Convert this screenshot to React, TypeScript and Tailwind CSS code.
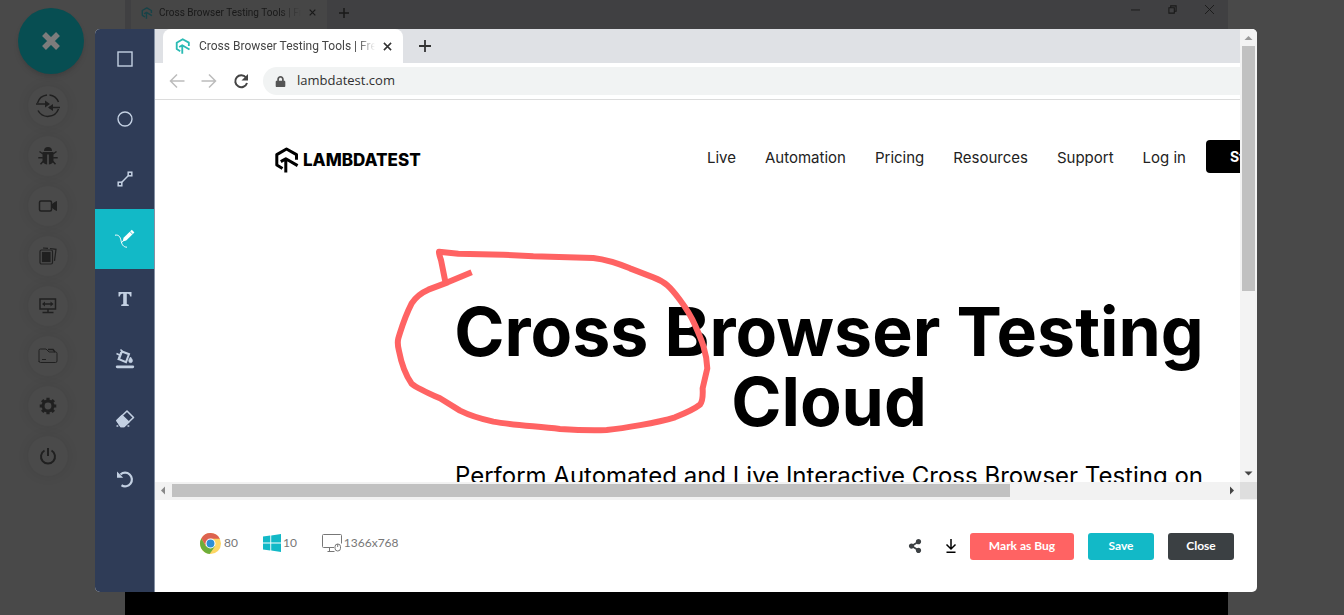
import React from "react";
import { FaLock, FaShareAlt } from "react-icons/fa";

const BrandMark = ({ className }: { className: string }) => (
  <svg viewBox="0 0 24 26" className={className} fill="none" stroke="currentColor" strokeWidth="3" strokeLinejoin="round">
    <path d="M7.5 21.5 1.8 18V7.6L11.5 2l10 5.6v5.2" />
    <path d="M5.8 14.6 10.8 11.7 22.6 18.6M10.8 12v13.4" />
  </svg>
);

const SwitchIcon = () => (
  <svg viewBox="0 0 26 26" className="size-[26px]" fill="none" stroke="currentColor" strokeWidth="1.5">
    <path d="M2.500 10A11.3 11.3 0 0 1 12 2M14.500 2A11.3 11.3 0 0 1 23.500 9M23.500 16A11.3 11.3 0 0 1 3 17.500" />
    <path d="M1 11h12M25 14.500H14" />
    <path d="m10 7.500 5 3.500-5 3.500zM18 11l-5 3.500 5 3.500z" fill="currentColor" stroke="none" />
  </svg>
);

const BugIcon = () => (
  <svg viewBox="0 0 20 20" className="size-5" fill="currentColor">
    <path d="M6 5a4 4 0 0 1 8 0z" />
    <path d="M4.500 6h11v7.500q0 4.500-4.600 5V8.500H9.100v10q-4.600-.5-4.600-5z" />
    <path d="M5 8 1.500 5.500M15 8l3.500-2.500M.3 11.800h4.500M15.200 11.800h4.500M5.500 15l-3 3.200M14.500 15l3 3.200" stroke="currentColor" strokeWidth="1.500" />
  </svg>
);

const VideoIcon = () => (
  <svg viewBox="0 0 20 14" className="h-3.5 w-5" fill="none" stroke="currentColor" strokeWidth="1.5">
    <rect x="1.5" y="2" width="12" height="10" rx="1.5" />
    <path d="m14.5 5 4-2.500v9l-4-2.500z" fill="currentColor" strokeWidth="1" />
  </svg>
);

const GalleryIcon = () => (
  <svg viewBox="0 0 20 20" className="size-5" fill="none" stroke="currentColor" strokeWidth="1.2">
    <rect x="2" y="4" width="12.500" height="14" rx="1.5" />
    <rect x="4.5" y="6.5" width="7.500" height="9" fill="currentColor" />
    <path d="M5 2l5 .3M12 2.500l6 .8-1.500 11.500" />
  </svg>
);

const MonitorIcon = () => (
  <svg viewBox="0 0 20 18" className="h-[18px] w-5" fill="none" stroke="currentColor" strokeWidth="1.5">
    <rect x="2" y="2" width="15.500" height="10" />
    <path d="M5.500 7H14M10 12v3M4.500 15.500h11" />
    <path d="m7 4.500-3 2.500 3 2.500zM12.500 4.500l3 2.500-3 2.500z" fill="currentColor" stroke="none" />
  </svg>
);

const FolderIcon = () => (
  <svg viewBox="0 0 20 16" className="h-4 w-5" fill="none" stroke="currentColor" strokeWidth="1">
    <path d="M1 14V2.500Q1 1 2.500 1H8l3 3h6.500Q19 4 19 5.500v7.500q0 1.500-1.500 1.500h-15Q1 14.500 1 13" />
    <path d="M10 1.500h5l2 2.500" strokeWidth="1.500" />
    <path d="M4 11.500h4" />
  </svg>
);

const GearIcon = () => (
  <svg viewBox="0 0 20 20" className="size-[18px]" fill="none" stroke="currentColor">
    <circle cx="10" cy="10" r="5.500" strokeWidth="3.400" />
    <path d="M10 .8v3.200M10 16v3.200M.8 10H4M16 10h3.200M3.500 3.500l2.300 2.300M14.200 14.200l2.300 2.300M3.500 16.500l2.300-2.300M14.200 5.800l2.300-2.300" strokeWidth="3.600" />
  </svg>
);

const PowerIcon = () => (
  <svg viewBox="0 0 18 18" className="size-[18px]" fill="none" stroke="currentColor" strokeWidth="2">
    <path d="M5.500 3.500a7 7 0 1 0 7 0M9 1v8" />
  </svg>
);

const railItems = [
  { label: "Switch", icon: <SwitchIcon /> },
  { label: "Report bug", icon: <BugIcon /> },
  { label: "Record video", icon: <VideoIcon /> },
  { label: "Gallery", icon: <GalleryIcon /> },
  { label: "Resolution", icon: <MonitorIcon /> },
  { label: "Files", icon: <FolderIcon /> },
  { label: "Settings", icon: <GearIcon /> },
  { label: "End session", icon: <PowerIcon /> },
];

const tools = [
  {
    label: "Rectangle",
    icon: (
      <svg viewBox="0 0 18 18" className="size-[18px]" fill="none" stroke="currentColor" strokeWidth="1.400">
        <rect x="2" y="2" width="14" height="14" />
      </svg>
    ),
  },
  {
    label: "Circle",
    icon: (
      <svg viewBox="0 0 18 18" className="size-[18px]" fill="none" stroke="currentColor" strokeWidth="1.400">
        <circle cx="9" cy="9" r="7" />
      </svg>
    ),
  },
  {
    label: "Line",
    icon: (
      <svg viewBox="0 0 18 18" className="size-[18px]" fill="none" stroke="currentColor" strokeWidth="1.500">
        <rect x="2.200" y="12.200" width="3.600" height="3.600" />
        <rect x="12.200" y="2.200" width="3.600" height="3.600" />
        <path d="m5.800 12.200 6.400-6.400" />
      </svg>
    ),
  },
  {
    label: "Pen",
    icon: (
      <svg viewBox="0 0 22 22" className="size-[22px]">
        <path d="M8.600 13.600 9.600 9.800 17.800 1.800l2.600 2.700-8.200 8z" fill="currentColor" />
        <path d="m15.600 3.200 3.200 3.300" stroke="#12b9c7" strokeWidth=".8" />
        <path d="M1 7.200c4-.8 5.300 2 6 5.300.8 4 2.200 6.600 6 6.700M9 13.200l-2 1.800" fill="none" stroke="currentColor" strokeWidth="1" />
      </svg>
    ),
  },
  {
    label: "Text",
    icon: (
      <svg viewBox="0 0 14 16" className="h-4 w-3.5" fill="currentColor">
        <path d="M.5 1h13v4.500h-1.300q-.3-2.800-2.200-2.800H8.800v10.200l2 .8V15H3.200v-1.300l2-.8V2.700H4q-1.900 0-2.200 2.800H.5z" />
      </svg>
    ),
  },
  {
    label: "Fill",
    icon: (
      <svg viewBox="0 0 20 22" className="h-[22px] w-5" fill="none" stroke="currentColor">
        <path d="m7 3.500 7 2.700-3 8-7-3z" strokeWidth="2" />
        <path d="M1.500 5.500 4.500 7M5.500 1.500l3 3M3 12l3-8" strokeWidth="1.500" />
        <path d="M15.500 9c1.500 2 2 2.800 2 3.800a1.900 1.900 0 0 1-3.800 0c0-1 .6-2 1.800-3.800z" fill="currentColor" strokeWidth=".6" />
        <path d="M2.200 18.800h15.600" strokeWidth="2.800" strokeLinecap="round" />
      </svg>
    ),
  },
  {
    label: "Eraser",
    icon: (
      <svg viewBox="0 0 20 20" className="size-5" fill="none" stroke="currentColor" strokeWidth="1.600" strokeLinejoin="round">
        <path d="M2 11.500 12 2l6.500 6.500-9.500 9H6z" />
        <path d="m2 11.500 5-5 6.800 6.500L9 17.500H6z" fill="currentColor" />
        <path d="M1.500 17h1.800M12.500 17h1.800" />
      </svg>
    ),
  },
  {
    label: "Undo",
    icon: (
      <svg viewBox="0 0 18 18" className="size-[18px]" fill="none" stroke="currentColor" strokeWidth="2.200">
        <path d="M4.500 4.500A6.800 6.800 0 1 1 5.500 15.300" />
        <path d="M1 1.500v6.200h6.200z" fill="currentColor" stroke="none" />
      </svg>
    ),
  },
];

const navLinks = ["Live", "Automation", "Pricing", "Resources", "Support", "Log in"];

const CrossIcon = ({ className }: { className: string }) => (
  <svg viewBox="0 0 10 10" className={className} fill="none" stroke="currentColor" strokeWidth="1.700">
    <path d="m1 1 8 8M9 1 1 9" />
  </svg>
);

const PlusIcon = ({ className }: { className: string }) => (
  <svg viewBox="0 0 12 12" className={className} fill="none" stroke="currentColor" strokeWidth="1.800">
    <path d="M6 0v12M0 6h12" />
  </svg>
);

const ChromeLogo = () => (
  <svg viewBox="0 0 48 48" className="size-[21px]">
    <circle cx="24" cy="24" r="24" fill="#fdd663" />
    <path d="M24 24 13.600 30 3.200 12A24 24 0 0 0 22 47.900L34.400 30z" fill="#6dae3a" />
    <path d="M24 24v-11h21.300A24 24 0 0 0 3.200 12l10.400 18z" fill="#dd6350" />
    <circle cx="24" cy="24" r="11.500" fill="#fff" />
    <circle cx="24" cy="24" r="9" fill="#2d8fd5" />
  </svg>
);

const WindowsLogo = () => (
  <svg viewBox="0 0 18 18" className="size-[18px]" fill="#12b9c7">
    <path d="M0 2.500 7.300 1.500v7H0zM8.200 1.400 18 0v8.500H8.200zM0 9.400h7.300v7L0 15.400zM8.200 9.400H18V18l-9.800-1.400z" />
  </svg>
);

const DisplayIcon = () => (
  <svg viewBox="0 0 20 18" className="h-[18px] w-5" fill="none" stroke="#777" strokeWidth="1">
    <path d="M12 13.500H1.500q-1 0-1-1v-11q0-1 1-1h17q1 0 1 1v8M5.500 17.500h7M7.500 14v3" />
    <rect x="13" y="10" width="5.500" height="7" rx="2.700" />
    <path d="M15.700 10v3" />
  </svg>
);

export default function App() {
  return (
    <div className="relative flex h-screen min-h-[600px] overflow-hidden bg-[#494949] font-['Inter',sans-serif]">
      <aside className="w-[125px] shrink-0 text-[#202020]">
        <button aria-label="Close menu" className="mt-2 ml-[18px] flex size-[66px] items-center justify-center rounded-full bg-[#074e52] text-[#7c7c7c] shadow-md">
          <svg viewBox="0 0 18 18" className="size-[18px]" stroke="currentColor" strokeWidth="5.500">
            <path d="m2 2 14 14M16 2 2 16" />
          </svg>
        </button>
        <nav aria-label="Session" className="mt-3 ml-7 flex flex-col gap-2.5">
          {railItems.map((item) => (
            <button key={item.label} aria-label={item.label} className="flex size-10 items-center justify-center rounded-full bg-[#4a4a4a] shadow-[0_0_12px_rgba(0,0,0,0.09)]">
              {item.icon}
            </button>
          ))}
        </nav>
      </aside>

      <div className="mr-[116px] flex min-w-0 flex-1 flex-col bg-black">
        <div className="flex h-[29px] items-center bg-[#404042] pl-1.5 text-[#191919]">
          <div className="flex h-full w-[196px] items-center bg-[#464646] pb-1 pl-2.5">
            <BrandMark className="size-3 shrink-0 text-[#174348]" />
            <span className="ml-1.5 w-[142px] overflow-hidden whitespace-nowrap font-['Roboto',sans-serif] text-[10px] [mask-image:linear-gradient(to_right,black_85%,transparent)]">
              Cross Browser Testing Tools | Free
            </span>
            <CrossIcon className="ml-2 size-[7px] shrink-0" />
          </div>
          <PlusIcon className="mb-1 ml-3 size-2.5" />
          <div className="mr-3.5 mb-2.5 ml-auto flex items-center gap-7">
            <svg viewBox="0 0 10 10" className="size-[9px]" fill="none" stroke="currentColor"><path d="M0 5.500h10" /></svg>
            <svg viewBox="0 0 10 10" className="size-[9px]" fill="none" stroke="currentColor" strokeWidth="1.200"><path d="M1 3h6v6H1zM3 3V1h6v6H7" /></svg>
            <svg viewBox="0 0 10 10" className="size-[9px]" fill="none" stroke="currentColor"><path d="m0 0 10 10M10 0 0 10" /></svg>
          </div>
        </div>
      </div>

      <div role="dialog" aria-label="Screenshot editor" className="absolute top-[29px] right-[87px] bottom-[23px] left-[95px] flex overflow-hidden rounded-[5px] bg-white">
        <div role="toolbar" aria-label="Drawing tools" className="flex w-[60px] shrink-0 flex-col border-r border-[#8490a3] bg-[#2f3c57] text-[#c3d0e2]">
          {tools.map((tool) => (
            <button
              key={tool.label}
              aria-label={tool.label}
              className={tool.label === "Pen" ? "flex h-[60px] items-center justify-center bg-[#12b9c7] text-white" : "flex h-[60px] items-center justify-center"}
            >
              {tool.icon}
            </button>
          ))}
        </div>

        <div className="flex min-w-0 flex-1 flex-col">
          <div className="flex min-h-0 flex-1">
            <div className="relative min-w-0 flex-1 overflow-hidden">
              <div className="w-[1348px]">
                <div className="flex h-[34px] items-center bg-[#dfe1e5] pl-2">
                  <div className="flex h-full w-60 items-center rounded-t-lg bg-white pl-3 text-[#454545]">
                    <BrandMark className="mr-2 size-4 shrink-0 text-[#2bbbb4]" />
                    <span className="w-[176px] shrink-0 overflow-hidden whitespace-nowrap font-['Roboto',sans-serif] text-xs [mask-image:linear-gradient(to_right,black_90%,transparent)]">
                      Cross Browser Testing Tools | Free
                    </span>
                    <CrossIcon className="ml-2 size-[9px] shrink-0 text-[#333]" />
                  </div>
                  <PlusIcon className="ml-4 size-3 text-[#333]" />
                </div>
                <div className="flex h-[37px] items-center border-b border-[#dcdcdc] pl-3.5">
                  <svg viewBox="0 0 82 16" className="h-4 w-[82px] shrink-0" fill="none" strokeWidth="1.500">
                    <path d="M15.500 8H2M8 1.500 1.500 8 8 14.500M32.500 8H46M40 1.500 46.500 8 40 14.500" stroke="#bcbcbc" />
                    <path d="M77 4.500A6 6 0 1 0 78 10" stroke="#444" strokeWidth="2" />
                    <path d="M79 1v6.500h-6.500z" fill="#444" />
                  </svg>
                  <div className="ml-3 flex h-7 flex-1 items-center rounded-l-full bg-[#f1f3f3] pl-3">
                    <FaLock className="size-[11px] text-[#555]" />
                    <input aria-label="Address" defaultValue="lambdatest.com" className="ml-[11px] w-60 bg-transparent font-['Open_Sans',sans-serif] text-[13px] text-[#303030] outline-none" />
                  </div>
                </div>
                <header className="mt-10 flex items-start pl-[120px]">
                  <div className="flex w-[432px] items-center gap-1 pt-[7px] text-black">
                    <BrandMark className="h-[26px] w-6" />
                    <span className="text-[17px] leading-6 font-extrabold">LAMBDATEST</span>
                  </div>
                  <nav aria-label="Main" className="mr-5 flex gap-[29px] pt-1.5 text-[15px] leading-6 text-[#222]">
                    {navLinks.map((link) => (
                      <a key={link} href="#">{link}</a>
                    ))}
                  </nav>
                  <button className="h-[33px] rounded bg-black px-6 text-sm font-bold text-white">Start Testing</button>
                </header>
                <main className="mx-auto mt-[123px] w-[800px] text-center text-black">
                  <h1 className="text-[68px] leading-[70px] font-bold">
                    Cross Browser Testing Cloud
                  </h1>
                  <p className="mt-6 text-2xl whitespace-nowrap">
                    Perform Automated and Live Interactive Cross Browser Testing on
                  </p>
                </main>
              </div>
              <svg className="pointer-events-none absolute top-0 left-0 h-[453px] w-[1085px]" viewBox="0 0 1085 453">
                <path
                  transform="translate(225 201) scale(.3333)"
                  d="M275 127 203 157 145 179C120 190 107 201 95 220C72 265 66 290 55 325Q51 340 57 363C65 405 80 440 95 461Q110 474 180 505L240 542Q280 562 340 575C400 586 460 588 540 597Q620 602 680 600C730 595 830 579 885 562Q940 540 960 524Q970 513 968 475L982 415C980 365 965 330 945 285Q930 250 900 210C870 170 855 155 820 142L750 115Q690 90 640 84L460 79 370 74 235 71 177 65Q176 70 183 90L196 155"
                  fill="none"
                  stroke="#ff6363"
                  strokeWidth="18"
                  strokeLinejoin="round"
                />
              </svg>
            </div>
            <div className="flex w-[17px] shrink-0 flex-col items-center bg-[#f3f3f3]">
              <svg viewBox="0 0 17 17" className="size-[17px] shrink-0" fill="#9a9a9a"><path d="m8.500 7 4 4h-8z" /></svg>
              <div className="h-[245px] w-[13px] bg-[#c1c1c1]" />
              <svg viewBox="0 0 17 17" className="mt-auto size-[17px] shrink-0" fill="#444"><path d="m8.500 10.500-4-4h8z" /></svg>
            </div>
          </div>
          <div className="flex h-[18px] shrink-0 items-center bg-[#f2f2f2] pb-px">
            <svg viewBox="0 0 17 17" className="size-[17px] shrink-0" fill="#888"><path d="m6 8.500 4-4v8z" /></svg>
            <div className="h-[13px] w-[76%] bg-[#c1c1c1]" />
            <svg viewBox="0 0 17 17" className="ml-auto size-[17px] shrink-0" fill="#444"><path d="m11 8.500-4-4v8z" /></svg>
            <div className="h-full w-[17px] bg-[#dedede]" />
          </div>
          <footer className="flex h-[92px] shrink-0 items-center pr-[23px] pl-[45px] font-['Lato',sans-serif] text-xs text-[#777]">
            <div className="mb-1.5 flex items-center gap-[25px]">
              <span className="flex items-center gap-[3px]"><ChromeLogo />80</span>
              <span className="flex items-center gap-0.5"><WindowsLogo />10</span>
              <span className="flex items-center gap-0.5"><DisplayIcon />1366x768</span>
            </div>
            <div className="ml-auto flex items-center text-xs font-bold text-white">
              <button aria-label="Share" className="mr-[22px] text-[#3d4144]"><FaShareAlt className="size-3.5" /></button>
              <button aria-label="Download" className="mr-3 text-black">
                <svg viewBox="0 0 14 14" className="size-3.5" fill="none" stroke="currentColor" strokeWidth="1.500">
                  <path d="M7 0v9.500M2.500 5.500 7 10l4.500-4.500M2.500 13.200h9" />
                </svg>
              </button>
              <div className="flex gap-3.5">
                <button className="h-[27px] w-[104px] rounded-[3px] bg-[#ff6363]">Mark as Bug</button>
                <button className="h-[27px] w-[66px] rounded-[3px] bg-[#12b9c7]">Save</button>
                <button className="h-[27px] w-[66px] rounded-[3px] bg-[#3b4043]">Close</button>
              </div>
            </div>
          </footer>
        </div>
      </div>
    </div>
  );
}
